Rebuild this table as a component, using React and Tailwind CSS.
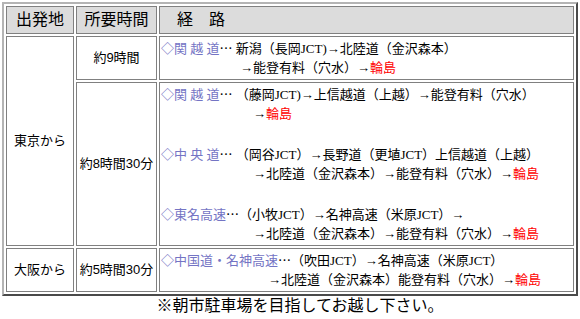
const serif = { fontFamily: '"Liberation Serif", "Noto Sans CJK JP", serif' };
const sans = { fontFamily: '"Liberation Sans", "Noto Sans CJK JP", sans-serif' };

const Label = ({ children }) => <span className="text-[#7474c4]">{children}</span>;
const Red = ({ children }) => <span className="text-[#ff0000]">{children}</span>;
// CJK ellipsis sits mid-height like the original
const Dots = () => <span style={{ fontFamily: '"Noto Sans CJK JP", sans-serif' }}>…</span>;

const Line = ({ indent = "", children }) => (
  <div className={`h-5 leading-5 whitespace-nowrap ${indent}`}>{children}</div>
);

const App = () => {
  const cell = "border border-[#808080] p-px";
  return (
    <div className="w-[580px] h-[319px] bg-white text-black" style={serif}>
      <table className="mt-0.5 ml-0.5 w-[576px] table-fixed border-separate border-spacing-[2px] border-2 border-t-[#b4b4b4] border-l-[#b4b4b4] border-r-[#4a4a4a] border-b-[#4a4a4a] text-[13px]">
        <colgroup>
          <col className="w-[68px]" />
          <col className="w-[81px]" />
          <col />
        </colgroup>
        <tbody>
          <tr>
            <td className={`${cell} h-[28px] bg-[#dcdcdc] text-center text-[16px] leading-5`}>出発地</td>
            <td className={`${cell} h-[28px] bg-[#dcdcdc] text-center text-[16px] leading-5`}>所要時間</td>
            <td className={`${cell} h-[28px] bg-[#dcdcdc] text-[16px] leading-5 whitespace-pre`}>{"　経　路"}</td>
          </tr>
          <tr>
            <td rowSpan={2} className={`${cell} text-center leading-5`}>東京から</td>
            <td className={`${cell} text-center leading-5 whitespace-nowrap`} style={sans}>約9時間</td>
            <td className={cell}>
              <Line><Label>◇関 越 道</Label><Dots /> 新潟（長岡JCT)→北陸道（金沢森本）</Line>
              <Line indent="pl-[79px]">→能登有料（穴水）→<Red>輪島</Red></Line>
            </td>
          </tr>
          <tr>
            <td className={`${cell} text-center leading-5 whitespace-nowrap`} style={sans}>約8時間30分</td>
            <td className={cell}>
              <Line><Label>◇関 越 道</Label><Dots /> （藤岡JCT)→上信越道（上越）→能登有料（穴水）</Line>
              <Line indent="pl-[92px]">→<Red>輪島</Red></Line>
              <Line />
              <Line><Label>◇中 央 道</Label><Dots /> （岡谷JCT）→長野道（更埴JCT）上信越道（上越）</Line>
              <Line indent="pl-[92px]">→北陸道（金沢森本）→能登有料（穴水）→<Red>輪島</Red></Line>
              <Line />
              <Line><Label>◇東名高速</Label><Dots />（小牧JCT）→名神高速（米原JCT）→</Line>
              <Line indent="pl-[92px]">→北陸道（金沢森本）→能登有料（穴水）→<Red>輪島</Red></Line>
            </td>
          </tr>
          <tr>
            <td className={`${cell} text-center leading-5`}>大阪から</td>
            <td className={`${cell} text-center leading-5 whitespace-nowrap`} style={sans}>約5時間30分</td>
            <td className={cell}>
              <Line><Label>◇中国道・名神高速</Label><Dots />（吹田JCT）→名神高速（米原JCT）</Line>
              <Line indent="pl-[107px]">→北陸道（金沢森本）能登有料（穴水）→<Red>輪島</Red></Line>
            </td>
          </tr>
        </tbody>
      </table>
      <div className="pl-5 text-center text-[16px] leading-5">※朝市駐車場を目指してお越し下さい。</div>
    </div>
  );
};

export default App;
